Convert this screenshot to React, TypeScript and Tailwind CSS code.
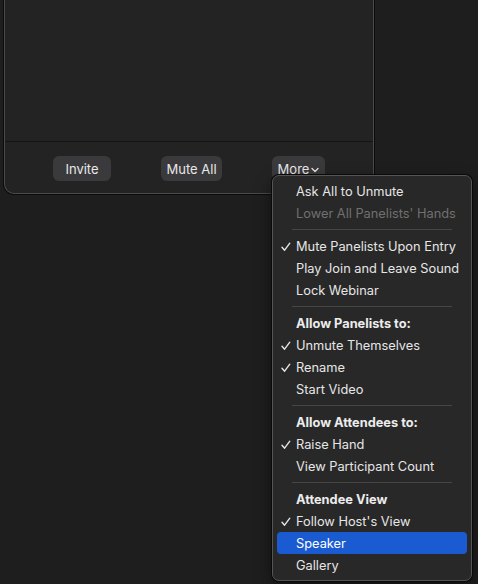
import React from "react";

type Item =
  | { kind: "item"; label: string; checked?: boolean; disabled?: boolean; highlight?: boolean }
  | { kind: "header"; label: string }
  | { kind: "sep" };

const items: Item[] = [
  { kind: "item", label: "Ask All to Unmute" },
  { kind: "item", label: "Lower All Panelists' Hands", disabled: true },
  { kind: "sep" },
  { kind: "item", label: "Mute Panelists Upon Entry", checked: true },
  { kind: "item", label: "Play Join and Leave Sound" },
  { kind: "item", label: "Lock Webinar" },
  { kind: "sep" },
  { kind: "header", label: "Allow Panelists to:" },
  { kind: "item", label: "Unmute Themselves", checked: true },
  { kind: "item", label: "Rename", checked: true },
  { kind: "item", label: "Start Video" },
  { kind: "sep" },
  { kind: "header", label: "Allow Attendees to:" },
  { kind: "item", label: "Raise Hand", checked: true },
  { kind: "item", label: "View Participant Count" },
  { kind: "sep" },
  { kind: "header", label: "Attendee View" },
  { kind: "item", label: "Follow Host's View", checked: true },
  { kind: "item", label: "Speaker", highlight: true },
  { kind: "item", label: "Gallery" },
];

function Check() {
  return (
    <svg width="10" height="10" viewBox="0 0 10 10" className="absolute left-[4px] top-[7px]">
      <path d="M1 5.2 L3.6 8.2 L8.8 1.2" fill="none" stroke="#e6e6e6" strokeWidth="1.4" strokeLinecap="round" strokeLinejoin="round" />
    </svg>
  );
}

export default function App() {
  const font = { fontFamily: "Inter, 'Liberation Sans', sans-serif" };
  return (
    <div className="relative w-[478px] h-[584px] bg-[#1e1e1e] overflow-hidden" style={font}>
      {/* window */}
      <div className="ml-[4px] w-[370px] h-[194px] bg-[#232323] rounded-b-[10px] border-x border-b border-[#4a4a4a] shadow-[0_0_0_1px_#0c0c0c] flex flex-col">
        <div className="h-[142px] border-b border-[#151515]" />
        <div className="flex-1 flex items-start pt-[14px]">
          <div className="ml-[48px] w-[58px] h-[25px] rounded-[6px] bg-[#3a3a3c] text-[#e8e8e8] text-[13px] flex items-center justify-center pt-[2px]">Invite</div>
          <div className="ml-[50px] w-[61px] h-[25px] rounded-[6px] bg-[#3a3a3c] text-[#e8e8e8] text-[13px] flex items-center justify-center pt-[2px]">Mute All</div>
          <div className="ml-[50px] w-[53px] h-[25px] rounded-[6px] bg-[#3a3a3c] text-[#e8e8e8] text-[13px] flex items-center justify-center gap-[2px] pt-[2px]">
            <span>More</span>
            <svg width="8" height="6" viewBox="0 0 8 6">
              <path d="M1 1.5 L4 4.5 L7 1.5" fill="none" stroke="#e8e8e8" strokeWidth="1.3" strokeLinecap="round" strokeLinejoin="round" />
            </svg>
          </div>
        </div>
      </div>

      {/* dropdown menu */}
      <div className="absolute left-[272px] top-[175px] w-[200px] h-[406px] rounded-[7px] bg-[#282828] border border-[#555555] shadow-[0_0_0_1px_#0a0a0a,0_6px_16px_rgba(0,0,0,0.5)] pt-[4px] px-[4px] flex flex-col">
        {items.map((it, i) => {
          if (it.kind === "sep")
            return (
              <div key={i} className="h-[11px] flex items-center px-[15px]">
                <div className="h-px w-full bg-[#464646]" />
              </div>
            );
          if (it.kind === "header")
            return (
              <div key={i} className="h-[22px] flex items-center pl-[19px] pt-[1px] text-[12.8px] font-bold text-[#ececec]">
                {it.label}
              </div>
            );
          return (
            <div
              key={i}
              className={
                "relative h-[22px] flex items-center pl-[19px] pt-[1px] text-[12.8px] rounded-[4px] " +
                (it.highlight ? "bg-[#1b5bd2] text-white" : it.disabled ? "text-[#707070]" : "text-[#e6e6e6]")
              }
            >
              {it.checked && <Check />}
              {it.label}
            </div>
          );
        })}
      </div>
    </div>
  );
}
